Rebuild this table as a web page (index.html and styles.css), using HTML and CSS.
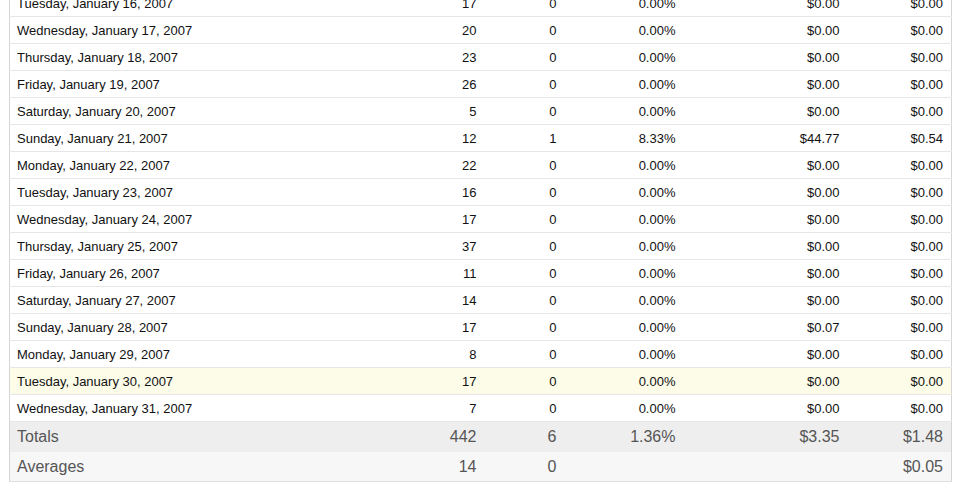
FILE: index.html
```html
<!DOCTYPE html>
<html>
<head>
<meta charset="utf-8">
<link rel="stylesheet" href="styles.css">
</head>
<body>
<div class="wrap">
<table class="report">
<colgroup><col class="c1"><col class="c2"><col class="c3"><col class="c4"><col class="c5"><col class="c6"></colgroup>
<tbody>
<tr><td>Tuesday, January 16, 2007</td><td>17</td><td>0</td><td>0.00%</td><td>$0.00</td><td>$0.00</td></tr>
<tr><td>Wednesday, January 17, 2007</td><td>20</td><td>0</td><td>0.00%</td><td>$0.00</td><td>$0.00</td></tr>
<tr><td>Thursday, January 18, 2007</td><td>23</td><td>0</td><td>0.00%</td><td>$0.00</td><td>$0.00</td></tr>
<tr><td>Friday, January 19, 2007</td><td>26</td><td>0</td><td>0.00%</td><td>$0.00</td><td>$0.00</td></tr>
<tr><td>Saturday, January 20, 2007</td><td>5</td><td>0</td><td>0.00%</td><td>$0.00</td><td>$0.00</td></tr>
<tr><td>Sunday, January 21, 2007</td><td>12</td><td>1</td><td>8.33%</td><td>$44.77</td><td>$0.54</td></tr>
<tr><td>Monday, January 22, 2007</td><td>22</td><td>0</td><td>0.00%</td><td>$0.00</td><td>$0.00</td></tr>
<tr><td>Tuesday, January 23, 2007</td><td>16</td><td>0</td><td>0.00%</td><td>$0.00</td><td>$0.00</td></tr>
<tr><td>Wednesday, January 24, 2007</td><td>17</td><td>0</td><td>0.00%</td><td>$0.00</td><td>$0.00</td></tr>
<tr><td>Thursday, January 25, 2007</td><td>37</td><td>0</td><td>0.00%</td><td>$0.00</td><td>$0.00</td></tr>
<tr><td>Friday, January 26, 2007</td><td>11</td><td>0</td><td>0.00%</td><td>$0.00</td><td>$0.00</td></tr>
<tr><td>Saturday, January 27, 2007</td><td>14</td><td>0</td><td>0.00%</td><td>$0.00</td><td>$0.00</td></tr>
<tr><td>Sunday, January 28, 2007</td><td>17</td><td>0</td><td>0.00%</td><td>$0.07</td><td>$0.00</td></tr>
<tr><td>Monday, January 29, 2007</td><td>8</td><td>0</td><td>0.00%</td><td>$0.00</td><td>$0.00</td></tr>
<tr class="hl"><td>Tuesday, January 30, 2007</td><td>17</td><td>0</td><td>0.00%</td><td>$0.00</td><td>$0.00</td></tr>
<tr><td>Wednesday, January 31, 2007</td><td>7</td><td>0</td><td>0.00%</td><td>$0.00</td><td>$0.00</td></tr>
</tbody>
<tfoot>
<tr class="totals"><td>Totals</td><td>442</td><td>6</td><td>1.36%</td><td>$3.35</td><td>$1.48</td></tr>
<tr class="averages"><td>Averages</td><td>14</td><td>0</td><td></td><td></td><td>$0.05</td></tr>
</tfoot>
</table>
</div>
</body>
</html>
```
FILE: styles.css
```css
html, body {
  margin: 0;
  padding: 0;
  background: #ffffff;
}
.wrap {
  margin: -10px 9px 0 9px;
}
.report {
  width: 942px;
  border-collapse: collapse;
  table-layout: fixed;
  font-family: "Liberation Sans", Arial, sans-serif;
  border-left: 1px solid #d4d4d4;
  border-right: 1px solid #d4d4d4;
}
.c1 { width: 395px; }
.c2 { width: 80px; }
.c3 { width: 80px; }
.c4 { width: 119px; }
.c5 { width: 164px; }
.c6 { width: 104px; }
.report td {
  height: 26px;
  padding: 0 8px 0 7px;
  font-size: 13px;
  color: #111;
  text-align: right;
  border-bottom: 1px solid #e6e6e6;
  white-space: nowrap;
  vertical-align: middle;
}
.report td:first-child {
  text-align: left;
}
.report tr.hl td {
  background: #fcfce9;
}
.report tr.totals td {
  height: 30px;
  background: #eeeeee;
  font-size: 16px;
  color: #555;
  border-bottom: none;
}
.report tr.averages td {
  height: 29px;
  background: #f7f7f7;
  font-size: 16px;
  color: #555;
  border-bottom: 1px solid #e0e0e0;
}
```
